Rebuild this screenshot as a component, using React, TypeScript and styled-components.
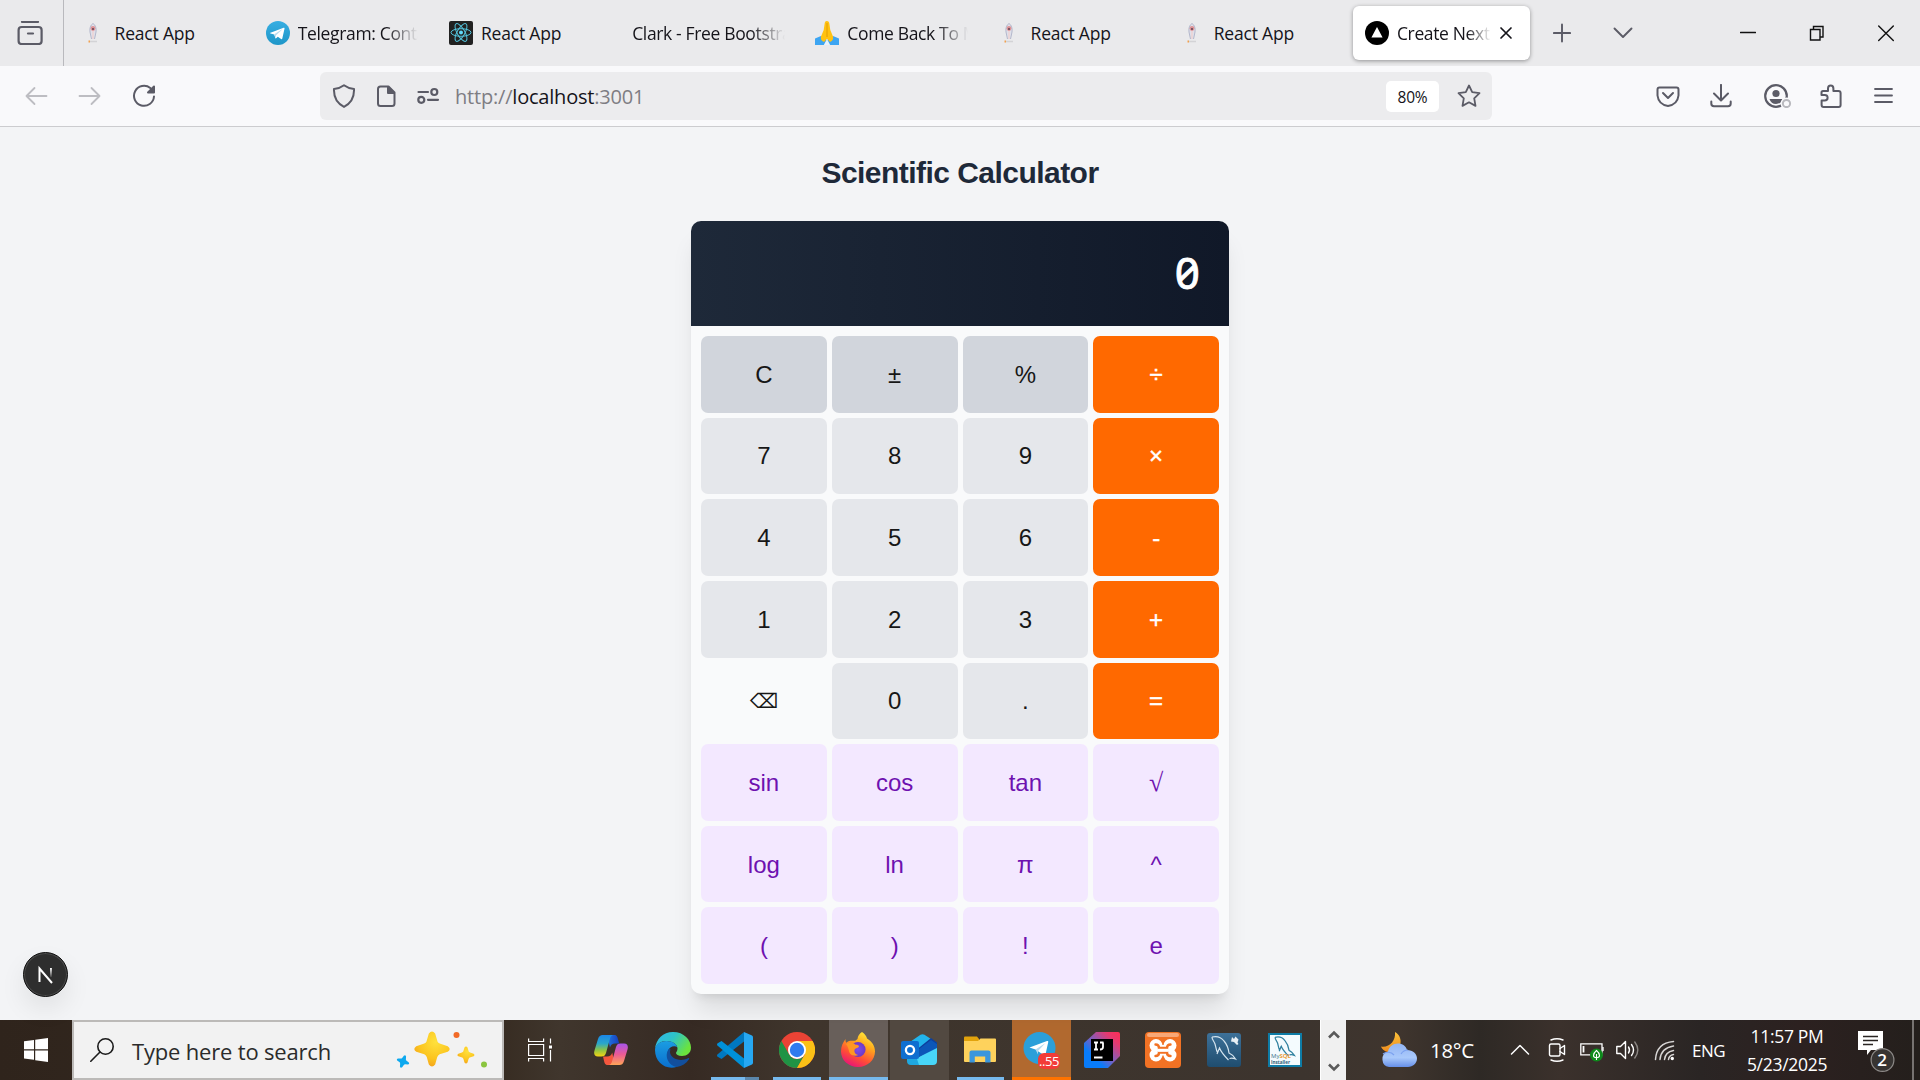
import React from "react";
import styled, { createGlobalStyle, css } from "styled-components";

const ui = `"Open Sans", "Noto Sans", sans-serif`;

const Global = createGlobalStyle`
  * { box-sizing: border-box; }
  body { margin: 0; background: #f3f4f6; font-family: ${ui}; overflow: hidden; }
  svg { display: block; flex: none; }
`;

const Screen = styled.div`
  width: 1920px;
  height: 1080px;
  display: flex;
  flex-direction: column;
  overflow: hidden;
`;

/* ---------- browser chrome ---------- */

const TabStrip = styled.div`
  height: 66px;
  flex: none;
  display: flex;
  align-items: stretch;
  background: #eaeaec;
`;

const TabOverview = styled.div`
  width: 64px;
  border-right: 1px solid #b9b9bd;
  display: flex;
  align-items: center;
  padding-left: 17px;
`;

const TabList = styled.div`
  display: flex;
  align-items: center;
  padding-left: 6.6px;
`;

const Tab = styled.div<{ $active?: boolean }>`
  width: ${(p) => (p.$active ? "177px" : "183.2px")};
  height: 54px;
  padding-left: 12px;
  display: flex;
  align-items: center;
  border-radius: 6px;
  color: #15141a;
  ${(p) =>
    p.$active &&
    css`
      background: #fff;
      box-shadow: 0 1px 4px rgba(0, 0, 0, 0.38);
    `}
`;

const Favicon = styled.span`
  width: 24px;
  height: 24px;
  margin-right: 8px;
  display: flex;
  flex: none;
`;

const TabTitle = styled.span<{ $w: number; $fade?: number }>`
  width: ${(p) => p.$w}px;
  font-size: 17.5px;
  line-height: 26px;
  letter-spacing: ${(p) => (p.$fade ? -0.35 : -0.2)}px;
  white-space: nowrap;
  overflow: hidden;
  ${(p) => p.$fade && css`mask-image: linear-gradient(to left, transparent 0, #000 ${p.$fade}px);`}
`;

const Spot = styled.div<{ $ml?: number; $w?: number }>`
  margin-left: ${(p) => p.$ml ?? 0}px;
  width: ${(p) => (p.$w ? `${p.$w}px` : "auto")};
  display: flex;
  align-items: center;
  flex: none;
`;

const Toolbar = styled.div`
  height: 61px;
  flex: none;
  background: #f9f9fb;
  border-bottom: 1px solid #cccccf;
  display: flex;
  align-items: center;
`;

const UrlBar = styled.div`
  width: 1172px;
  height: 48px;
  margin-left: 164px;
  border-radius: 6px;
  background: #ececee;
  display: flex;
  align-items: center;
`;

const Url = styled.div`
  margin-left: 15px;
  width: 931px;
  font-size: 20px;
  letter-spacing: -0.2px;
  line-height: 28px;
  padding-top: 2px;
  color: #7e7d83;
  b { font-weight: 400; color: #15141a; }
`;

const Zoom = styled.div`
  width: 53px;
  height: 31px;
  border-radius: 5px;
  background: #fff;
  color: #15141a;
  font-size: 15.5px;
  letter-spacing: -0.2px;
  padding-top: 1px;
  display: flex;
  align-items: center;
  justify-content: center;
`;

/* ---------- page ---------- */

const Page = styled.main`
  flex: 1;
  min-height: 0;
  background: #f3f4f6;
  display: flex;
  flex-direction: column;
  align-items: center;
  position: relative;
  font-family: "Liberation Sans", Arial, sans-serif;
`;

const Title = styled.h1`
  margin: 28px 0 30px;
  font-size: 30px;
  line-height: 36px;
  font-weight: 700;
  letter-spacing: -0.54px;
  color: #1e2939;
`;

const Calculator = styled.section`
  width: 538px;
  height: 773px;
  border-radius: 10px;
  overflow: hidden;
  background: #f9fafb;
  box-shadow: 0 20px 25px -5px rgba(0, 0, 0, 0.1), 0 8px 10px -6px rgba(0, 0, 0, 0.1);
`;

const Display = styled.div`
  height: 105px;
  padding: 0 29px 3px 0;
  background: linear-gradient(to right, #1e2939, #101828);
  color: #fff;
  display: flex;
  align-items: center;
  justify-content: flex-end;
  font-family: "Noto Sans", "DejaVu Sans Mono", monospace;
  font-feature-settings: "zero";
  font-size: 44px;
  line-height: 50px;
  -webkit-text-stroke: 0.8px #fff;
`;

const Keys = styled.div`
  height: 668px;
  padding: 10px;
  display: grid;
  grid-template-columns: repeat(4, 1fr);
  grid-template-rows: repeat(8, 1fr);
  gap: 5px;
`;

type Kind = "util" | "num" | "op" | "del" | "fn" | "root";
const kinds: Record<Kind, [string, string]> = {
  util: ["#d1d5dc", "#171717"],
  num: ["#e5e7eb", "#171717"],
  op: ["#ff6900", "#ffffff"],
  del: ["transparent", "#171717"],
  fn: ["#f3e8ff", "#6e11b0"],
  root: ["#f3e8ff", "#6e11b0"],
};

const Key = styled.button<{ $kind: Kind }>`
  border: 0;
  padding: 1px 0 0;
  border-radius: 7px;
  min-height: 0;
  background: ${(p) => kinds[p.$kind][0]};
  color: ${(p) => kinds[p.$kind][1]};
  font-family: "Liberation Sans", Arial, "DejaVu Sans", sans-serif;
  font-size: ${(p) => (p.$kind === "del" ? 20 : 24)}px;
  line-height: 30px;
  display: flex;
  align-items: center;
  justify-content: center;
  ${(p) => p.$kind === "op" && css`-webkit-text-stroke: 0.4px #fff;`}
  ${(p) => p.$kind === "root" && css`font-family: "Liberation Serif", serif; font-size: 26px;`}
`;

const DevBadge = styled.div`
  position: absolute;
  left: 23px;
  top: 825px;
  width: 45px;
  height: 45px;
  border-radius: 50%;
  background: #2e2e2e;
  border: 1px solid #111;
  box-shadow: inset 0 0 0 1px #4c4c4c, 0 12px 26px rgba(0, 0, 0, 0.08);
  display: flex;
  align-items: center;
  justify-content: center;
`;

/* ---------- taskbar ---------- */

const Taskbar = styled.footer`
  height: 60px;
  flex: none;
  display: flex;
  background: linear-gradient(to right, #2f241c 0, #372c22 500px, #40362d 560px, #362a23 690px, #40362d 800px, #3c342e 1300px, #3f352e 1400px, #2e2925 1480px, #3b312c 1560px, #2a2524 1700px, #2c2120 1800px, #241f1c 1920px);
  color: #fff;
`;

const Start = styled.div`
  width: 72px;
  display: flex;
  align-items: center;
  justify-content: center;
`;

const Search = styled.div`
  width: 432px;
  border: 2px solid #bcbab8;
  background: #f2f2f2;
  color: #2b2b2b;
  display: flex;
  align-items: center;
  font-size: 22px;
  letter-spacing: -0.18px;
`;

const SearchText = styled.span`
  width: 263px;
  margin-left: 18px;
  padding-top: 1px;
  white-space: nowrap;
`;

const TaskView = styled.div`
  width: 78px;
  padding-left: 24px;
  display: flex;
  align-items: center;
`;

const AppSlot = styled.div<{ $w: number; $bg?: string }>`
  width: ${(p) => p.$w}px;
  padding-right: 2px;
  display: flex;
  > div { background: ${(p) => p.$bg ?? "transparent"}; }
`;

const AppTile = styled.div`
  flex: 1;
  display: flex;
  flex-direction: column;
  align-items: center;
  justify-content: space-between;
`;

const AppIcon = styled.div`
  height: 57px;
  padding: 3px 1px 0 0;
  display: flex;
  align-items: center;
`;

const Underline = styled.div<{ $w: number; $c: string }>`
  width: ${(p) => p.$w}px;
  height: 3px;
  background: ${(p) => p.$c};
`;

const Scroller = styled.div`
  width: 26px;
  margin-left: 3px;
  background: #f0f0f0;
  border-left: 1px solid #fff;
  display: flex;
  flex-direction: column;
  align-items: center;
  justify-content: space-between;
  padding: 10px 0 8px;
`;

const Label = styled.span<{ $size: number; $ml: number; $w: number; $ls?: number }>`
  font-size: ${(p) => p.$size}px;
  margin-left: ${(p) => p.$ml}px;
  width: ${(p) => p.$w}px;
  letter-spacing: ${(p) => p.$ls ?? 0}px;
  align-self: center;
  white-space: nowrap;
  flex: none;
`;

const Clock = styled.div`
  width: 96px;
  margin-left: 13px;
  display: flex;
  flex-direction: column;
  align-items: center;
  font-size: 17.5px;
  letter-spacing: -0.3px;
  line-height: 28px;
  padding-top: 2px;
  white-space: nowrap;
  flex: none;
`;

const ShowDesktop = styled.div`
  width: 8px;
  margin-left: auto;
  border-left: 2px solid #777371;
`;

/* ---------- icons ---------- */

const Line: React.FC<{ c?: string; w?: number; s?: number; children: React.ReactNode }> = ({ c = "#5b5b66", w = 1.8, s = 24, children }) => (
  <svg width={s} height="24" viewBox={`0 0 ${s} 24`} fill="none" stroke={c} strokeWidth={w} strokeLinecap="round" strokeLinejoin="round">
    {children}
  </svg>
);

const Rocket = () => (
  <svg width="24" height="24" viewBox="0 0 24 24">
    <path d="M10 2.500C7.500 4 6.500 7 7 11l1.500 7M10 2.500C12.500 4 13.500 7 13 11l-1.500 7" fill="#dfe0ea" stroke="#b3b7cc" strokeWidth="1" />
    <circle cx="10" cy="7.500" r="2.400" fill="#dd9296" />
    <circle cx="10" cy="8" r="1" fill="#5d4152" />
    <path d="M10 10v8" stroke="#ebc3c6" strokeWidth="1" />
    <path d="M6 20.500h8" stroke="#d3d3d6" strokeWidth="1.500" />
    <path d="M5.500 20.500h1.500" stroke="#f3a14e" strokeWidth="2" />
  </svg>
);

const TelegramMark = ({ size }: { size: number }) => (
  <svg width={size} height={size} viewBox="0 0 24 24">
    <defs>
      <linearGradient id="tg" x2="0" y2="1"><stop stopColor="#37aee2" /><stop offset="1" stopColor="#1e96c8" /></linearGradient>
    </defs>
    <circle cx="12" cy="12" r="12" fill="url(#tg)" />
    <path d="M4.500 11.800 17.600 6.700c.6-.2 1.100.2.900 1l-2.200 9.900c-.2.700-.6.900-1.200.5l-3.300-2.400-1.700 1.600c-.3.300-.7.200-.8-.2l-1.100-3.600-3.600-1.100c-.7-.2-.7-.5-.1-.6z" fill="#fff" />
    <path d="m8.300 13.300 7.400-4.700c.3-.2.600 0 .3.200l-6 5.500-.3 2.600z" fill="#b9dcef" />
  </svg>
);

const ReactMark = () => (
  <svg width="24" height="24" viewBox="0 0 24 24">
    <rect width="24" height="24" rx="2" fill="#212121" />
    <g fill="none" stroke="#54c5de" strokeWidth="1">
      <ellipse cx="12" cy="11.500" rx="10" ry="3.800" />
      <ellipse cx="12" cy="11.500" rx="10" ry="3.800" transform="rotate(60 12 11.500)" />
      <ellipse cx="12" cy="11.500" rx="10" ry="3.800" transform="rotate(120 12 11.500)" />
    </g>
    <circle cx="12" cy="11.500" r="2" fill="#61dafb" />
  </svg>
);

const Hands = () => (
  <svg width="24" height="24" viewBox="0 0 24 24">
    <path d="M0 17.500 6 15l6 4v5H0zM24 17.500 18 15l-6 4v5h12z" fill="#3da5f2" />
    <path d="M11.800 0c-1.500 0-2 .9-2.200 3L8.700 9 6 15.500c-.6 2.500.3 4.500 3 5.500l3-3.200 3 3.200c2.700-1 3.600-3 3-5.500L15.300 9l-.9-6c-.2-2.100-.9-3-2.600-3z" fill="#ffc212" />
    <path d="M12 2v14" stroke="#dc9600" strokeWidth=".8" />
    <path d="m12 18-3.200 6h6.400z" fill="#eaf3fa" />
  </svg>
);

const NextMark = () => (
  <svg width="24" height="24" viewBox="0 0 24 24">
    <circle cx="12" cy="12" r="12" />
    <path d="m12 6 5.600 10.500H6.400z" fill="#fff" />
  </svg>
);

const Star4 = ({ x, y, r, fill, rot = 0 }: { x: number; y: number; r: number; fill: string; rot?: number }) => (
  <path
    transform={`translate(${x} ${y}) rotate(${rot}) scale(${r})`}
    fill={fill}
    d="M-.18-.88Q0-1.120.18-.88L.32-.42Q.36-.34.48-.3L.9-.16Q1.120 0 .9.16L.44.300Q.36.340.3.460L.18.880Q0 1.120-.18.880L-.3.460Q-.36.340-.44.300L-.9.160Q-1.120 0-.9-.16L-.48-.3Q-.36-.34-.32-.42Z"
  />
);

const Sparkles = () => (
  <svg width="94" height="42" viewBox="0 0 94 42">
    <defs>
      <radialGradient id="gold" cx=".6" cy=".3" r=".8"><stop stopColor="#ffe13c" /><stop offset=".6" stopColor="#fbc41f" /><stop offset="1" stopColor="#f29a1c" /></radialGradient>
    </defs>
    <Star4 x={37} y={20} r={17.500} fill="url(#gold)" />
    <Star4 x={71} y={26} r={8.500} fill="url(#gold)" />
    <Star4 x={8} y={32.500} r={6.500} fill="#0ea9ef" rot={20} />
    <circle cx="61.500" cy="6" r="3" fill="#f26a26" />
    <circle cx="89" cy="35.500" r="3" fill="#8bc53f" />
  </svg>
);

const Copilot = () => (
  <svg width="34" height="32" viewBox="0 0 34 32">
    <defs>
      <linearGradient id="cpA" x2="0" y2="1"><stop stopColor="#1a86e8" /><stop offset=".4" stopColor="#2ba7c9" /><stop offset=".7" stopColor="#8ec544" /><stop offset="1" stopColor="#f5d312" /></linearGradient>
      <linearGradient id="cpB" x2="0" y2="1"><stop stopColor="#a754ea" /><stop offset=".5" stopColor="#ea5a95" /><stop offset="1" stopColor="#ffa457" /></linearGradient>
      <linearGradient id="cpC" x2="1" y2="0"><stop stopColor="#2277e0" /><stop offset="1" stopColor="#153fbf" /></linearGradient>
    </defs>
    <path d="M13 1h7c3 0 3.500 2 4.200 5l1 3.500h-4c-3 0-4.500 1.500-5.200 4z" fill="url(#cpC)" />
    <path d="M21 31h-7c-3 0-3.500-2-4.200-5L9 22.500h4c3 0 4.500-1.500 5.200-4z" fill="#f4573e" />
    <path d="M8.500 1H20c-2.500 0-3.500 1.500-4.300 4.500L12 19c-.8 2.500-2 3.500-4.500 3.500H4C.5 22.500-.5 20 .5 16.500L4 5C5 2 6.500 1 8.500 1z" fill="url(#cpA)" />
    <path d="M25.500 31H14c2.500 0 3.500-1.500 4.300-4.500L22 13c.8-2.500 2-3.500 4.500-3.500H30c3.500 0 4.500 2.500 3.500 6L30 27c-1 3-2.500 4-4.500 4z" fill="url(#cpB)" />
  </svg>
);

const Edge = () => (
  <svg width="36" height="36" viewBox="0 0 36 36">
    <defs>
      <linearGradient id="egA" x2="1" y2=".5"><stop stopColor="#2fb5ee" /><stop offset=".5" stopColor="#2ec4c8" /><stop offset="1" stopColor="#6be33d" /></linearGradient>
      <linearGradient id="egB" x2="0" y2="1"><stop stopColor="#1b9de2" /><stop offset="1" stopColor="#0a6fce" /></linearGradient>
    </defs>
    <path d="M0 17C1 7 8 0 18 0c11 0 18 8 18 15.500C36 21 32 24 27 24c-4 0-6-1.500-6-3 0-1 1.500-1.800 1.500-4.500C22.500 12 17 9 11.500 9 5.500 9 1.500 12.500 0 17z" fill="url(#egA)" />
    <path d="M0 18C0 13 5 9 11.500 9c6 0 10 3 10.700 6-3-2-8-.5-9.200 4-1.500 6 2 13.500 9 15.800C11 38.500 0 30.500 0 18z" fill="url(#egB)" />
    <path d="M13.500 17.500C9 24 13.500 34 22 35c5-.8 9-3.500 12-7.800.6-.9-.2-1.400-1-.9-8 4-17.500.2-18-6.300 0-1 .2-1.700.6-2.500-.8-.8-1.600-.7-2.100 0z" fill="#124f9d" />
  </svg>
);

const VSCode = () => (
  <svg width="36" height="36" viewBox="0 0 36 36">
    <path d="M27 0v9.500L4.500 27 .7 24.700c-.9-.8-.9-1.700 0-2.500z" fill="#0078c0" />
    <path d="M27 36v-9.500L4.500 9 .7 11.300c-.9.800-.9 1.700 0 2.500z" fill="#0091d9" />
    <path d="m27 0 8 3.500c.7.400 1 .9 1 1.700v25.600c0 .8-.3 1.300-1 1.700L27 36z" fill="#27a8f2" />
  </svg>
);

const Chrome = () => (
  <svg width="36" height="36" viewBox="0 0 36 36">
    <circle cx="18" cy="18" r="18" fill="#ea4335" />
    <path d="M2.400 9A18 18 0 0 0 18 36l7.800-13.500A9 9 0 0 1 10.200 22.500z" fill="#1f9345" />
    <path d="M18 9h15.600A18 18 0 0 1 18 36l7.800-13.500z" fill="#fbc116" />
    <circle cx="18" cy="18" r="9" fill="#fff" />
    <circle cx="18" cy="18" r="7.200" fill="#2f7bee" />
  </svg>
);

const Firefox = () => (
  <svg width="34" height="36" viewBox="0 0 34 36">
    <defs>
      <linearGradient id="ffA" x1=".8" x2=".3" y2="1"><stop stopColor="#fff13e" /><stop offset=".35" stopColor="#ffa81c" /><stop offset=".7" stopColor="#ff4e35" /><stop offset="1" stopColor="#e8127a" /></linearGradient>
      <radialGradient id="ffB"><stop stopColor="#7a4dee" /><stop offset="1" stopColor="#7038c0" /></radialGradient>
    </defs>
    <path d="M21 0c3 2.200 4.500 4 5 6.500C31 9.500 34 14 34 19.500 34 28 26.500 35 17 35S0 28 0 19.500C0 14 2 10.500 4.500 7c0 1.800.2 2.800.7 3.700C7 9 9 8.800 11 8.800 14 9 15 8.500 16.500 7 16.800 4 18.500 1.500 21 0z" fill="url(#ffA)" />
    <circle cx="17" cy="17.500" r="7.600" fill="url(#ffB)" />
    <path d="M5 12c3-2 7-1.500 9.500.7 2 0 3.500.7 3.500 1.600 0 1.700-4 1.700-4.500 3.700-.4 2 .6 4.500 4 5-5 2-9-.5-9.500-4C7.500 16.500 6.500 14 5 12z" fill="#ff9722" />
  </svg>
);

const Outlook = () => (
  <svg width="36" height="32" viewBox="0 0 36 32">
    <path d="M6 10 19.500.8q2-1.200 4 0L36 9v5L6 22z" fill="#22b4ec" />
    <path d="m17 14.500 13-10.500 6 4.500v4L18 22z" fill="#0d3f9c" />
    <path d="M36 12v15q0 4-4 4H13l-2-4z" fill="#48d6f8" />
    <path d="m18 15 12-9 6 4v4l-18 9z" fill="#0c57b8" />
    <path d="M6 22h9l3 9h-8q-4 0-4-4z" fill="#1fa8e0" />
    <rect y="7" width="18" height="18" rx="2" fill="#0f6fd0" />
    <circle cx="9" cy="16" r="4.100" fill="none" stroke="#fff" strokeWidth="2.300" />
  </svg>
);

const Explorer = () => (
  <svg width="32" height="28" viewBox="0 0 32 28">
    <path d="M0 1.500Q0 .500 1 .500h12l2 2.500v4H0z" fill="#e2a30c" />
    <path d="M0 5h14l2.500-2.500H31q1 0 1 1V25q0 1-1 1H1q-1 0-1-1z" fill="#fed25c" />
    <path d="M5.500 26.500v-10q0-2 2-2h17q2 0 2 2v10h-5.300v-6H10.800v6z" fill="#3a96dd" />
  </svg>
);

const TelegramApp = () => (
  <svg width="38" height="40" viewBox="0 0 38 40">
    <circle cx="17.500" cy="18" r="16" fill="#2b9fd9" />
    <path d="M7.500 17.500 25 11c1-.3 1.400.2 1.200 1.200L23.500 24.500c-.3 1-.8 1.100-1.500.7l-8.500-5.600z" fill="#fff" />
    <path d="m13.500 19.600 10-6.600-7.500 8v3.500z" fill="#b5d9ee" />
    <rect x="16" y="23" width="22" height="16" rx="6" fill="#f23c38" />
    <text x="27" y="35.500" fill="#fff" fontSize="13" textAnchor="middle" fontFamily="Open Sans" letterSpacing="-.4">..55</text>
  </svg>
);

const IntelliJ = () => (
  <svg width="36" height="36" viewBox="0 0 36 36">
    <defs>
      <linearGradient id="ijA" x1="1" x2="0" y2="1"><stop stopColor="#ff2d54" /><stop offset=".2" stopColor="#e6396f" /><stop offset=".5" stopColor="#7b5fc0" /><stop offset=".72" stopColor="#087cfa" /></linearGradient>
    </defs>
    <path d="M12 0h22q2 0 2 2v22L24 36H2q-2 0-2-2V11z" fill="url(#ijA)" />
    <rect x="7" y="7" width="22" height="22" />
    <path d="M10 10.500h4M12 10.500v7M10 17.500h4M16 10.500h3.500M19 10.500v4.500q0 2.500-3 2.500M10 25.500h8.500" stroke="#fff" strokeWidth="1.800" fill="none" />
  </svg>
);

const Xampp = () => (
  <svg width="36" height="36" viewBox="0 0 36 36">
    <rect width="36" height="36" rx="4" fill="#f27224" />
    <rect x="2" y="1" width="32" height="4" rx="2" fill="#f9a877" />
    <g fill="#fff">
      <circle cx="11" cy="13.500" r="6.500" /><circle cx="25" cy="13.500" r="6.500" />
      <circle cx="11" cy="23" r="6.500" /><circle cx="25" cy="23" r="6.500" />
      <rect x="8" y="13" width="20" height="10.500" />
    </g>
    <g fill="none" stroke="#f27224" strokeWidth="2.600" strokeLinecap="round">
      <path d="M10.500 12.500q3.500 0 3.500 3.500h8q0-3.500 3.500-3.500" strokeWidth="2.400" />
      <path d="M10.500 24q3.500 0 3.500-3.500h8q0 3.500 3.500 3.500" strokeWidth="2.400" />
    </g>
    <rect x="13" y="16.800" width="10" height="3" fill="#fff" />
  </svg>
);

const dolphin = "M5 4c4-1 9 0 12 4 3 3.500 4.500 8 5 12 2.500 1 4.500 3 6.500 6-2.500-1-4.500-1-6-.5M5 4c0 3 2 4 3 7s1 6 2.500 8.500l2-4.500c2 5 5 8 9 12M12.500 15 10 21";

const Workbench = () => (
  <svg width="34" height="34" viewBox="0 0 34 34">
    <defs><linearGradient id="wb" x2="0" y2="1"><stop stopColor="#3d7199" /><stop offset="1" stopColor="#1f4d6f" /></linearGradient></defs>
    <rect width="34" height="34" rx="3" fill="url(#wb)" />
    <path d={dolphin} fill="none" stroke="#d6e5ef" strokeWidth="1.200" />
    <path d="m25 4 2 2 1.500-2.500 3 3-1 3 1 1.500-1.500 1-3-3-3-.500z" fill="#e8f0f5" />
  </svg>
);

const Installer = () => (
  <svg width="34" height="34" viewBox="0 0 34 34">
    <rect x="1" y="1" width="32" height="32" fill="#f4fbfe" stroke="#0e7ca6" strokeWidth="2" />
    <path d={dolphin} transform="translate(3 1) scale(.82)" fill="none" stroke="#2f809f" strokeWidth="1.500" />
    <text x="3" y="25" fontSize="6" fill="#3d748c" fontFamily="Open Sans">My<tspan fill="#eda03a" fontWeight="700">SQL</tspan></text>
    <text x="3" y="30.500" fontSize="5.500" fontWeight="700" fill="#2c5d78" fontFamily="Open Sans" textLength="19" lengthAdjust="spacingAndGlyphs">Installer</text>
  </svg>
);

const Weather = () => (
  <svg width="36" height="36" viewBox="0 0 36 36">
    <defs>
      <linearGradient id="cl" x2="0" y2="1"><stop stopColor="#93b5f3" /><stop offset=".6" stopColor="#a9c9fb" /><stop offset="1" stopColor="#668fe8" /></linearGradient>
      <linearGradient id="mn" x2="0" y2="1"><stop stopColor="#fbc23a" /><stop offset="1" stopColor="#ee8b1d" /></linearGradient>
    </defs>
    <path d="M14 0c9 5 7 19-4 20C5 20.500 1.500 18 0 14.500 8 16 15 9 14 0z" fill="url(#mn)" />
    <path d="M8 35a8 8 0 0 1-1-15.500C8 14.500 12 11.500 17 11.500c4.500 0 8 2.500 9 6.500 6 0 10 4 10 8.500S32 35 27 35z" fill="url(#cl)" />
    <path d="M2 22c3-2.500 8-2.500 11 1M20 22c1.500-2.500 4-4 7-4" fill="none" stroke="#7ba1ef" strokeWidth="1.200" />
  </svg>
);

/* ---------- data ---------- */

const tabs: { icon: React.ReactNode; title: string; w: number; fade?: number }[] = [
  { icon: <Rocket />, title: "React App", w: 120 },
  { icon: <TelegramMark size={24} />, title: "Telegram: Contact", w: 120, fade: 32 },
  { icon: <ReactMark />, title: "React App", w: 120 },
  { icon: null, title: "Clark - Free Bootstrap", w: 153, fade: 34 },
  { icon: <Hands />, title: "Come Back To Me", w: 121, fade: 32 },
  { icon: <Rocket />, title: "React App", w: 120 },
  { icon: <Rocket />, title: "React App", w: 120 },
];

const keys: [string, Kind][] = [
  ["C", "util"], ["±", "util"], ["%", "util"], ["÷", "op"],
  ["7", "num"], ["8", "num"], ["9", "num"], ["×", "op"],
  ["4", "num"], ["5", "num"], ["6", "num"], ["-", "op"],
  ["1", "num"], ["2", "num"], ["3", "num"], ["+", "op"],
  ["⌫", "del"], ["0", "num"], [".", "num"], ["=", "op"],
  ["sin", "fn"], ["cos", "fn"], ["tan", "fn"], ["√", "root"],
  ["log", "fn"], ["ln", "fn"], ["π", "fn"], ["^", "fn"],
  ["(", "fn"], [")", "fn"], ["!", "fn"], ["e", "fn"],
];

const blue = "#76b9ed";
const apps: { icon: React.ReactNode; w: number; bg?: string; line?: [number, string] }[] = [
  { icon: <Copilot />, w: 61.75 },
  { icon: <Edge />, w: 61.75 },
  { icon: <VSCode />, w: 61.75, line: [48, `linear-gradient(to right, ${blue} 34px, #5b87ab 34px)`] },
  { icon: <Chrome />, w: 61.75, line: [48, blue] },
  { icon: <Firefox />, w: 61, bg: "#685f5a", line: [59, blue] },
  { icon: <Outlook />, w: 61, bg: "#524941" },
  { icon: <Explorer />, w: 61, line: [47, blue] },
  { icon: <TelegramApp />, w: 61, bg: "#b1692f", line: [59, "#ff7300"] },
  { icon: <IntelliJ />, w: 61 },
  { icon: <Xampp />, w: 61 },
  { icon: <Workbench />, w: 61 },
  { icon: <Installer />, w: 61 },
];

export default function App() {
  return (
    <Screen>
      <Global />
      <TabStrip>
        <TabOverview>
          <Line w={2.2} s={26}>
            <path d="M5 .9h16" /><rect x="1.600" y="6" width="23" height="17" rx="3" /><path d="M11 12.500h5" />
          </Line>
        </TabOverview>
        <TabList>
          {tabs.map((t, i) => (
            <Tab key={i}>
              {t.icon && <Favicon>{t.icon}</Favicon>}
              <TabTitle $w={t.w} $fade={t.fade}>{t.title}</TabTitle>
            </Tab>
          ))}
          <Tab $active>
            <Favicon><NextMark /></Favicon>
            <TabTitle $w={94} $fade={24}>Create Next App</TabTitle>
            <Spot $ml={8}>
              <Line c="#15141a" w={1.7} s={14}><path d="m2 7 10 10M12 7 2 17" /></Line>
            </Spot>
          </Tab>
        </TabList>
        <Spot $ml={23}><Line w={1.900} s={18}><path d="M9 3.500v17M.9 12h16.200" /></Line></Spot>
        <Spot $ml={42}><Line w={1.900} s={20}><path d="m1.500 7.500 8.500 8.500 8.500-8.500" /></Line></Spot>
        <Spot $ml={107}><Line c="#111" w={1.300} s={16}><path d="M.5 11.500h15" /></Line></Spot>
        <Spot $ml={53}><Line c="#111" w={1.400} s={16}><g strokeLinejoin="miter"><path d="M1.500 8.500h9.500V19H1.500z" /><path d="M4.500 8V5.500H14V16h-2.500" /></g></Line></Spot>
        <Spot $ml={53}><Line c="#111" w={1.400} s={16}><path d="m.7 5 14.600 14.600M15.300 5 .7 19.600" /></Line></Spot>
      </TabStrip>

      <Toolbar>
        <Spot $ml={24}><Line c="#bdbdc2"><path d="M22.500 12H2.500M10.500 4 2.500 12l8 8" /></Line></Spot>
        <Spot $ml={30}><Line c="#bdbdc2"><path d="M1.500 12h20M13.500 4l8 8-8 8" /></Line></Spot>
        <Spot $ml={30}>
          <Line w={2}><path d="M22 12.500a10 10 0 1 1-3.700-8.500" /><path d="M22 2.500v6h-6z" fill="#5b5b66" /></Line>
        </Spot>
        <UrlBar>
          <Spot $ml={12}><Line w={2}><path d="M12 1.200c3 2.300 6.500 3.400 10 3.700.4 8-2.500 14-10 18C4.500 18.900 1.600 12.900 2 4.900c3.500-.3 7-1.400 10-3.700z" /></Line></Spot>
          <Spot $ml={18}>
            <Line w={2}><path d="M6.500 2.500h8l6 6v11q0 2.500-2.500 2.500H6.500Q4 22 4 19.500V5q0-2.500 2.500-2.500z" /><path d="M14 3v6h6z" fill="#5b5b66" /></Line>
          </Spot>
          <Spot $ml={18}>
            <Line w={2.200}><path d="M2.500 8h9.500M12 15.800h10" /><circle cx="18.300" cy="8" r="3" /><circle cx="5.300" cy="15.800" r="3" /></Line>
          </Spot>
          <Url>http://<b>localhost</b>:3001</Url>
          <Zoom>80%</Zoom>
          <Spot $ml={18}>
            <Line><path d="m12 1.500 3.200 6.700 7.300 1-5.300 5.100 1.300 7.600L12 18.300l-6.500 3.600 1.300-7.600L1.500 9.200l7.300-1z" /></Line>
          </Spot>
        </UrlBar>
        <Spot $ml={164}><Line w={2}><path d="M3.500 3.500h17q2 0 2 2v6q-1 9-10.500 10.500Q2.500 20.500 1.500 11.500v-6q0-2 2-2z" /><path d="m7 9 5 5 5-5" /></Line></Spot>
        <Spot $ml={29}><Line w={2}><path d="M12 .9v15M5 9.500l7 7 7-7M2.300 17.500v2q0 2.800 2.700 2.800h14q2.700 0 2.700-2.800v-2" /></Line></Spot>
        <Spot $ml={31}>
          <Line s={28}>
            <circle cx="12" cy="12" r="10.800" strokeWidth="2.200" /><circle cx="12" cy="9.500" r="3.600" fill="#5b5b66" stroke="none" />
            <path d="M5.500 15h13q-1.500 5-6.500 5t-6.500-5z" fill="#5b5b66" stroke="none" />
            <circle cx="22.500" cy="19.500" r="6" fill="#f9f9fb" stroke="none" /><circle cx="22.500" cy="19.500" r="3.600" stroke="#b9b9be" strokeWidth="2" />
          </Line>
        </Spot>
        <Spot $ml={27}>
          <Line w={2}><path d="M2.500 11V8.500q0-1.500 1.500-1.500h5V4.500q0-3 2.700-3t2.700 3V7h5q2.200 0 2.200 2v12q0 2-2 2h-15q-2 0-2-2v-4.500h3q3 0 3-2.800T5.500 11z" /></Line>
        </Spot>
        <Spot $ml={28}><Line w={1.800}><path d="M4 5h17M4 11.500h17M4 18h17" /></Line></Spot>
      </Toolbar>

      <Page>
        <Title>Scientific Calculator</Title>
        <Calculator>
          <Display>0</Display>
          <Keys>
            {keys.map(([label, kind]) => (
              <Key key={label} $kind={kind}>{label}</Key>
            ))}
          </Keys>
        </Calculator>
        <DevBadge>
          <svg width="18" height="20" viewBox="0 0 18 20">
            <defs><linearGradient id="nx" x2="0" y2="1"><stop stopColor="#fff" /><stop offset="1" stopColor="#fff" stopOpacity=".1" /></linearGradient></defs>
            <path d="M2.500 17V3.500L15 18" fill="none" stroke="#fff" strokeWidth="2" />
            <rect x="13" y="3" width="1.900" height="9" fill="url(#nx)" />
          </svg>
        </DevBadge>
      </Page>

      <Taskbar>
        <Start>
          <svg width="24" height="24" viewBox="0 0 24 24" fill="#fff">
            <path d="M0 3.300 10 1.900V11.200H0zM11.200 1.700 24 0v11.200H11.200zM0 12.400h10v9.300L0 20.400zM11.200 12.400H24V24l-12.800-1.800z" />
          </svg>
        </Start>
        <Search>
          <Spot $ml={16}>
            <Line c="#1c1c1c" w={1.600}><circle cx="15.500" cy="8.500" r="7.700" /><path d="M10 14 .8 23.200" /></Line>
          </Spot>
          <SearchText>Type here to search</SearchText>
          <Sparkles />
        </Search>
        <TaskView>
          <svg width="24" height="24" viewBox="0 0 24 24" fill="none" stroke="#fff" strokeWidth="1.200">
            <path d="M.6.5v3h15v-3M.6 23.500v-3h15v3M.6 6.500h15v11H.6zM22.500.5v5M22.500 12v11.500" />
            <rect x="21" y="7.500" width="3" height="3" fill="#fff" stroke="none" />
          </svg>
        </TaskView>
        {apps.map((a, i) => (
          <AppSlot key={i} $w={a.w} $bg={a.bg}>
            <AppTile>
              <AppIcon>{a.icon}</AppIcon>
              {a.line && <Underline $w={a.line[0]} $c={a.line[1]} />}
            </AppTile>
          </AppSlot>
        ))}
        <Scroller>
          <svg width="12" height="9" viewBox="0 0 12 9"><path d="m1 7.500 5-5 5 5" fill="none" stroke="#5a5a5a" strokeWidth="2.600" /></svg>
          <svg width="12" height="9" viewBox="0 0 12 9"><path d="m1 1.500 5 5 5-5" fill="none" stroke="#5a5a5a" strokeWidth="2.600" /></svg>
        </Scroller>
        <Spot $ml={35}><Weather /></Spot>
        <Label $size={20.500} $ml={13} $w={80} $ls={-0.300}>18°C</Label>
        <Spot><Line c="#fff" w={1.500} s={20}><path d="m1.500 16 8.500-8.500 8.500 8.500" /></Line></Spot>
        <Spot $ml={18}>
          <Line c="#fff" w={1.400} s={18}>
            <path d="M3 2q6-2.500 12 0M3 22q6 2.500 12 0" /><rect x="1.500" y="6" width="10.500" height="12" rx="1.500" /><path d="m12 10.500 4.500-3v9l-4.500-3" />
          </Line>
        </Spot>
        <Spot $ml={14}>
          <svg width="24" height="24" viewBox="0 0 24 24" fill="none" stroke="#fff" strokeWidth="1.300">
            <path d="M.8 5.800H22v11H.8z" /><path d="M3.500 8v6.500" strokeWidth="1.800" /><path d="M23 9v4" />
            <circle cx="16.500" cy="17" r="6.500" fill="#0e8a1c" stroke="none" />
            <path d="M16.500 12.500q-3 2.500-3 5 0 2.200 3 2.200t3-2.200q0-2.500-3-5zM16.500 16v6" strokeWidth="1.100" />
          </svg>
        </Spot>
        <Spot $ml={12}>
          <Line c="#fff" w={1.400}>
            <path d="M.8 8.500h3.700L9.500 3.500v17l-5-5H.8z" /><path d="M12.500 9q2 3 0 6M15.500 6.500q4 5.500 0 11" /><path d="M18.800 4q6 8 0 16" stroke="#8b8683" />
          </Line>
        </Spot>
        <Spot $ml={14}>
          <Line c="#d8d6d5" w={1.500} s={22}>
            <path d="M1.500 21.500Q2.500 5 19.500 3.500M6 21.500Q7 10 19.500 8M10.500 21.500q.8-7.500 9-9M14.500 21.500q.5-4 5-5" />
            <circle cx="18.300" cy="20.500" r="1.700" fill="#fff" stroke="none" />
          </Line>
        </Spot>
        <Label $size={17} $ml={16} $w={34} $ls={-0.500}>ENG</Label>
        <Clock>
          <span>11:57 PM</span>
          <span>5/23/2025</span>
        </Clock>
        <Spot $ml={23}>
          <svg width="38" height="44" viewBox="0 0 38 44">
            <path d="M0 3h25v19H13l-4 5v-5H0z" fill="#fff" />
            <path d="M5 8.500h15M5 12.500h15M5 16.500h10" stroke="#2a2523" strokeWidth="1.300" />
            <circle cx="24.500" cy="32" r="11.400" fill="#373432" stroke="#8e8b89" strokeWidth="1.200" />
            <text x="24" y="38" fill="#fff" fontSize="17" fontWeight="600" textAnchor="middle" fontFamily="Open Sans">2</text>
          </svg>
        </Spot>
        <ShowDesktop />
      </Taskbar>
    </Screen>
  );
}
